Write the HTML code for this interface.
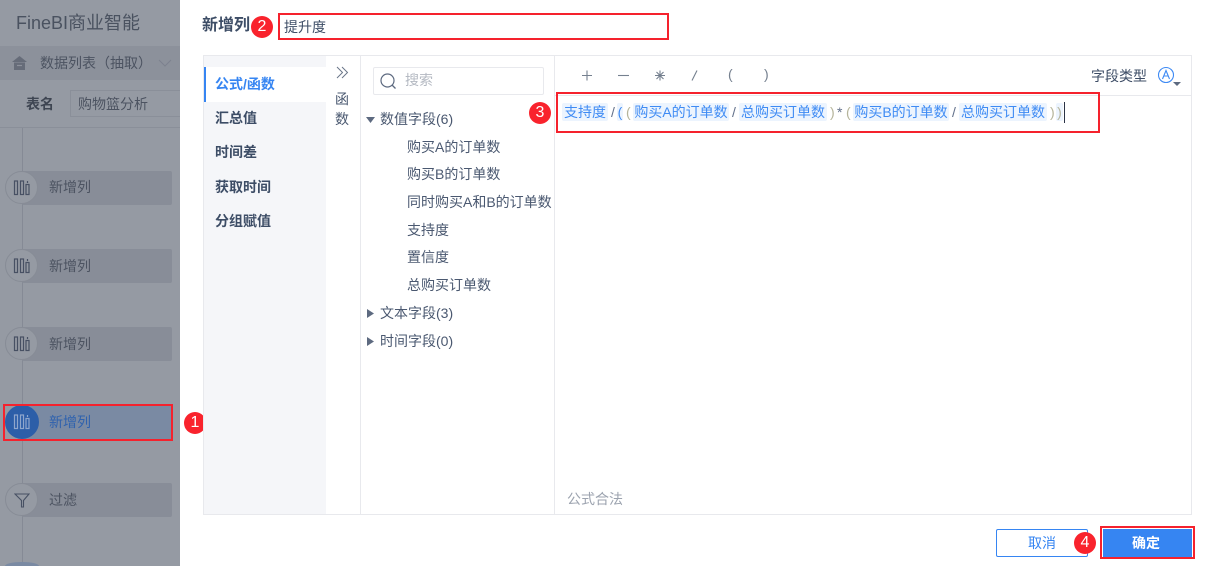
<!DOCTYPE html>
<html><head><meta charset="utf-8">
<style>
html,body{margin:0;padding:0;background:#fff;overflow:hidden}
#p{position:relative;width:1215px;height:566px;overflow:hidden;background:#fff;font-family:"Liberation Sans","Noto Sans CJK SC",sans-serif;font-size:14px;color:#3d4d66}
#p div,#p svg{position:absolute}
.t{white-space:nowrap;line-height:18px}
.rb{border:2px solid #f5222d;box-sizing:border-box}
.num{width:22px;height:22px;border-radius:50%;background:#f9232d;color:#fff;font-size:16px;line-height:22px;text-align:center}
.card{left:22px;width:150px;height:34px;background:#888d98;border-radius:2px}
.circ{left:5px;width:33px;height:33px;border-radius:50%;background:#959aa3;border:1px solid #878c96;box-sizing:border-box}
.tk{top:103px;height:18px;background:#ecf4fe;border-radius:2px;color:#3f8bf4;font-size:14px;line-height:18px;white-space:nowrap;text-align:center}
.op{top:103px;font-size:14px;line-height:18px;color:#62708a}
.br{top:103px;font-size:14px;line-height:18px;color:#b5b49a}
.nav{left:215px;font-weight:bold;font-size:14px;color:#3d4d66;line-height:18px;white-space:nowrap}
.leaf{left:407px;font-size:14px;color:#4a5870;line-height:18px;white-space:nowrap}
.grp{left:380px;font-size:14px;color:#4a5870;line-height:18px;white-space:nowrap}
.sym{font-size:14px;color:#75808f;line-height:18px}
</style></head>
<body><div id="p">
<!-- left dim panel -->
<div style="left:0;top:0;width:180px;height:566px;background:#959aa3"></div>
<div class="t" style="left:16px;top:11px;font-size:18px;line-height:24px;color:#4a5260">FineBI商业智能</div>
<div style="left:0;top:46px;width:180px;height:34px;background:#8c919b"></div>
<svg style="left:11px;top:55px" width="17" height="16" viewBox="0 0 17 16"><path d="M8.5 1L16 7H1z" fill="#666c79"/><path d="M3 7.5h11V15H3z" fill="#666c79"/><path d="M6 10.5h5" stroke="#8c919b" stroke-width="1.2"/></svg>
<div class="t" style="left:40px;top:54px;color:#4c5361">数据列表（抽取）</div>
<svg style="left:158px;top:59px" width="14" height="9" viewBox="0 0 14 9"><path d="M1 1l6 6 6-6" fill="none" stroke="#7c828e" stroke-width="1"/></svg>
<div class="t" style="left:26px;top:95px;font-weight:bold;color:#3e4552">表名</div>
<div style="left:70px;top:90px;width:110px;height:27px;border:1px solid #8a8f99;border-right:0;box-sizing:border-box"></div>
<div class="t" style="left:78px;top:95px;color:#4c5361">购物篮分析</div>
<div style="left:0;top:127px;width:180px;height:1px;background:#8a8f99"></div>
<div style="left:22px;top:128px;width:1px;height:438px;background:#858a95"></div>
<!-- cards -->
<div class="card" style="top:171px"></div>
<div class="card" style="top:249px"></div>
<div class="card" style="top:327px"></div>
<div class="card" style="top:406px;background:#7a8aa3"></div>
<div class="card" style="top:483px"></div>
<div class="circ" style="top:171px"></div>
<div class="circ" style="top:249px"></div>
<div class="circ" style="top:327px"></div>
<div class="circ" style="top:405px;background:#2c5ea8;border-color:#2c5ea8;left:5px;width:34px;height:34px"></div>
<div class="circ" style="top:483px"></div>
<div style="left:5px;top:562px;width:34px;height:4px;overflow:hidden"><div style="left:0;top:0;width:34px;height:4px;border-radius:17px 17px 0 0/4px 4px 0 0;background:#7a8aa3"></div></div>
<svg style="left:13px;top:180px" width="18" height="16" viewBox="0 0 18 16"><g fill="none" stroke="#475063" stroke-width="1.2"><rect x="1.500" y="1" width="3" height="13.500"/><rect x="7.500" y="1" width="3" height="13.500"/><rect x="13" y="4.500" width="3" height="10"/><path d="M14.500 1v2"/></g></svg>
<svg style="left:13px;top:258px" width="18" height="16" viewBox="0 0 18 16"><g fill="none" stroke="#475063" stroke-width="1.2"><rect x="1.500" y="1" width="3" height="13.500"/><rect x="7.500" y="1" width="3" height="13.500"/><rect x="13" y="4.500" width="3" height="10"/><path d="M14.500 1v2"/></g></svg>
<svg style="left:13px;top:336px" width="18" height="16" viewBox="0 0 18 16"><g fill="none" stroke="#475063" stroke-width="1.2"><rect x="1.500" y="1" width="3" height="13.500"/><rect x="7.500" y="1" width="3" height="13.500"/><rect x="13" y="4.500" width="3" height="10"/><path d="M14.500 1v2"/></g></svg>
<svg style="left:13px;top:414px" width="18" height="16" viewBox="0 0 18 16"><g fill="none" stroke="#8fa6cc" stroke-width="1.2"><rect x="1.500" y="1" width="3" height="13.500"/><rect x="7.500" y="1" width="3" height="13.500"/><rect x="13" y="4.500" width="3" height="10"/><path d="M14.500 1v2"/></g></svg>
<svg style="left:14px;top:493px" width="16" height="15" viewBox="0 0 16 15"><path d="M1 1h14L9.500 7.500V14H7.500V7.500z" fill="none" stroke="#475063" stroke-width="1.1"/></svg>
<div class="t" style="left:49px;top:178px;color:#4c5361">新增列</div>
<div class="t" style="left:49px;top:257px;color:#4c5361">新增列</div>
<div class="t" style="left:49px;top:335px;color:#4c5361">新增列</div>
<div class="t" style="left:49px;top:413px;color:#2f62ae">新增列</div>
<div class="t" style="left:49px;top:491px;color:#4c5361">过滤</div>
<div class="rb" style="left:3px;top:404px;width:170px;height:37px"></div>
<div class="num" style="left:184px;top:412px">1</div>
<!-- header -->
<div class="t" style="left:202px;top:16px;font-size:16px;line-height:20px;font-weight:bold;color:#3d4d66">新增列</div>
<div class="num" style="left:251px;top:16px">2</div>
<div class="rb" style="left:278px;top:13px;width:391px;height:27px"></div>
<div class="t" style="left:284px;top:18px;color:#3d4d66">提升度</div>
<!-- main frame -->
<div style="left:203px;top:55px;width:989px;height:460px;border:1px solid #e8e9ed;box-sizing:border-box"></div>
<div style="left:204px;top:56px;width:122px;height:458px;background:#f5f6f9"></div>
<div style="left:204px;top:67px;width:122px;height:35px;background:#fff"></div>
<div style="left:204px;top:67px;width:2px;height:35px;background:#3685f2"></div>
<div class="nav" style="left:215px;top:75px;color:#3685f2">公式/函数</div>
<div class="nav" style="top:109px">汇总值</div>
<div class="nav" style="top:143px">时间差</div>
<div class="nav" style="top:178px">获取时间</div>
<div class="nav" style="top:212px">分组赋值</div>
<svg style="left:336px;top:66px" width="13" height="13" viewBox="0 0 13 13"><path d="M1 1l5.500 5.500L1 12M6 1l5.500 5.500L6 12" fill="none" stroke="#6a7689" stroke-width="1"/></svg>
<div class="t" style="left:335px;top:90px;color:#4a5870">函</div>
<div class="t" style="left:335px;top:110px;color:#4a5870">数</div>
<div style="left:360px;top:56px;width:1px;height:458px;background:#e8e9ed"></div>
<div style="left:554px;top:56px;width:1px;height:458px;background:#e8e9ed"></div>
<!-- search -->
<div style="left:373px;top:67px;width:171px;height:28px;border:1px solid #e8e9ed;border-radius:2px;box-sizing:border-box"></div>
<svg style="left:379px;top:72px" width="18" height="18" viewBox="0 0 18 18"><circle cx="8.500" cy="8.500" r="6.500" fill="none" stroke="#5d6a80" stroke-width="1.2"/><path d="M13 13l3.500 3.500" stroke="#5d6a80" stroke-width="1.3"/></svg>
<div class="t" style="left:405px;top:71px;color:#b4b9c2">搜索</div>
<!-- tree -->
<svg style="left:366px;top:117px" width="9" height="6" viewBox="0 0 9 6"><path d="M0 0h9L4.500 6z" fill="#5d6a80"/></svg>
<div class="grp" style="top:110px">数值字段(6)</div>
<div class="leaf" style="top:138px">购买A的订单数</div>
<div class="leaf" style="top:165px">购买B的订单数</div>
<div class="leaf" style="top:193px">同时购买A和B的订单数</div>
<div class="leaf" style="top:221px">支持度</div>
<div class="leaf" style="top:248px">置信度</div>
<div class="leaf" style="top:276px">总购买订单数</div>
<svg style="left:367px;top:309px" width="7" height="9" viewBox="0 0 7 9"><path d="M0 0l7 4.500-7 4.500z" fill="#5d6a80"/></svg>
<div class="grp" style="top:304px">文本字段(3)</div>
<svg style="left:367px;top:337px" width="7" height="9" viewBox="0 0 7 9"><path d="M0 0l7 4.500-7 4.500z" fill="#5d6a80"/></svg>
<div class="grp" style="top:332px">时间字段(0)</div>
<!-- toolbar -->
<svg style="left:580px;top:68px" width="200" height="16" viewBox="0 0 200 16"><g fill="none" stroke="#75808f" stroke-width="1.1"><path d="M2 7.500h10M7 2.500v10"/><path d="M38 7.500h11"/><path d="M75 7.500h10M80 2.500v10M76.500 4l7 7M83.500 4l-7 7"/><path d="M117 2.500l-5 10"/></g></svg>
<div class="sym" style="left:728px;top:65px">(</div>
<div class="sym" style="left:764px;top:65px">)</div>
<div class="t" style="left:1091px;top:67px;color:#3d4d66">字段类型</div>
<svg style="left:1157px;top:66px" width="26" height="22" viewBox="0 0 26 22"><circle cx="9" cy="9" r="7.500" fill="none" stroke="#3f8bf4" stroke-width="1.1"/><path d="M5.500 13L9 4.500 12.500 13M6.700 10h4.600" fill="none" stroke="#3f8bf4" stroke-width="1.1"/><path d="M16 16h8l-4 4z" fill="#5d6a80"/></svg>
<div style="left:555px;top:95px;width:636px;height:1px;background:#e8e9ed"></div>
<!-- formula -->
<div class="tk" style="left:562px;width:46px">支持度</div>
<div class="op" style="left:611px">/</div>
<div class="tk" style="left:617px;width:6px">(</div>
<div class="br" style="left:626px">(</div>
<div class="tk" style="left:633px;width:96px">购买A的订单数</div>
<div class="op" style="left:732px">/</div>
<div class="tk" style="left:739px;width:88px">总购买订单数</div>
<div class="br" style="left:830px">)</div>
<div class="op" style="left:837px">*</div>
<div class="br" style="left:846px">(</div>
<div class="tk" style="left:853px;width:96px">购买B的订单数</div>
<div class="op" style="left:952px">/</div>
<div class="tk" style="left:959px;width:88px">总购买订单数</div>
<div class="br" style="left:1050px">)</div>
<div class="tk" style="left:1056px;width:7px;color:#b5b49a">)</div>
<div style="left:1064px;top:102px;width:1px;height:21px;background:#2a3245"></div>
<div class="rb" style="left:556px;top:92px;width:544px;height:41px"></div>
<div class="num" style="left:529px;top:102px">3</div>
<div class="t" style="left:567px;top:490px;color:#9ca3af">公式合法</div>
<!-- buttons -->
<div style="left:996px;top:529px;width:92px;height:28px;border:1px solid #3685f2;border-radius:2px;box-sizing:border-box;background:#fff"></div>
<div class="t" style="left:1028px;top:534px;color:#3685f2">取消</div>
<div class="num" style="left:1074px;top:532px">4</div>
<div class="rb" style="left:1100px;top:526px;width:95px;height:33px"></div>
<div style="left:1103px;top:529px;width:89px;height:28px;background:#3685f2"></div>
<div class="t" style="left:1132px;top:534px;color:#fff;font-weight:bold">确定</div>
</div></body></html>
